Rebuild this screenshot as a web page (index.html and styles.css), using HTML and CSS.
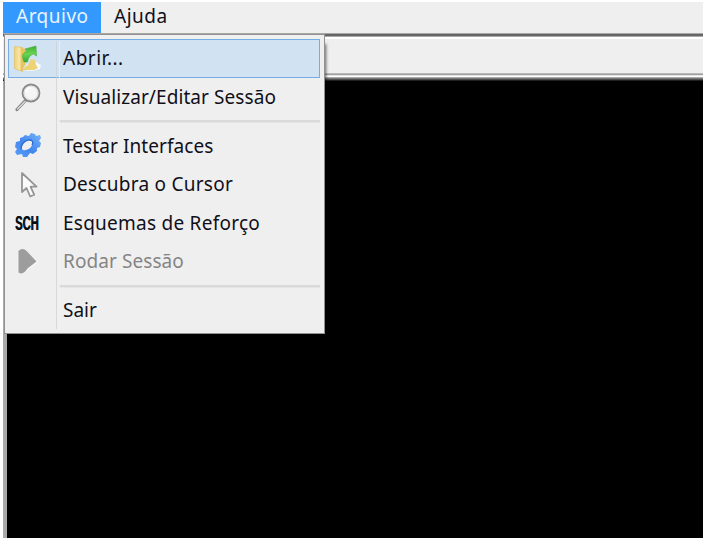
FILE: index.html
```html
<!DOCTYPE html>
<html lang="pt-BR">
<head>
<meta charset="utf-8">
<title>Arquivo</title>
<link rel="stylesheet" href="styles.css">
</head>
<body>
<div class="window">
  <nav class="menubar"><span class="tab active">Arquivo</span><span class="tab">Ajuda</span></nav>
  <div class="toolbar"></div>
  <main class="canvas"></main>
  <div class="menu">
    <div class="item selected">
      <svg class="icon" viewBox="0 0 34 34">
        <defs>
          <linearGradient id="folder"><stop offset="0" stop-color="#efd078"/><stop offset=".6" stop-color="#f9e6a6"/><stop offset="1" stop-color="#dfb950"/></linearGradient>
          <linearGradient id="arrow" x2="0" y2="1"><stop offset="0" stop-color="#3fae38"/><stop offset=".5" stop-color="#69d551"/><stop offset="1" stop-color="#35a832"/></linearGradient>
        </defs>
        <path d="M18 24l6-5 3 2 5 3-1 4-8 2-9-1z" fill="#fff" opacity=".8"/>
        <path d="M12 29l7-5 3-6 4 1 1 5 2 3-4 2z" fill="#eed375"/>
        <path d="M5.500 5.500l8 1v24l-8-3z" fill="url(#folder)" stroke="#e0c06a" stroke-width=".7"/>
        <path d="M12 7l5 1 1 5-2 11-4 6z" fill="#e8c65f"/>
        <path d="M15 21C12 14 14 12 18 10L16 8l11-3 .5 10-3-2c-3 1-5 3-6 8z" fill="url(#arrow)" stroke="#45ad3c" stroke-width=".6"/>
      </svg><span class="label w-open">Abrir...</span>
    </div>
    <div class="item">
      <svg class="icon" viewBox="0 0 34 34">
        <path d="M16.500 20.500L8 29.500" stroke="#858585" stroke-width="3.200" stroke-linecap="round"/>
        <path d="M16 21.500L8.500 29" stroke="#ddd" stroke-width="1.200" stroke-linecap="round"/>
        <circle cx="22" cy="13" r="8.500" fill="#f5f5f5" stroke="#898989" stroke-width="1.800"/>
        <circle cx="22" cy="13" r="6.800" fill="none" stroke="#ddd"/>
        <path d="M17 12q1-4 5-4" fill="none" stroke="#fff" stroke-width="2"/>
      </svg><span class="label w-view">Visualizar/Editar Sessão</span>
    </div>
    <div class="separator"></div>
    <div class="item">
      <svg class="icon" viewBox="0 0 34 34">
        <defs><linearGradient id="gear" x1="1" y1="0" x2="0" y2="1"><stop offset="0" stop-color="#77b4fa"/><stop offset=".55" stop-color="#4387ee"/><stop offset="1" stop-color="#5ba0fb"/></linearGradient></defs>
        <path fill="url(#gear)" fill-rule="evenodd" d="M16 6l4 1 2-3 4 1 1 2 4-1 1 3-2 3 2 2-1 4-3 1 0 3-4 3-3-1-3 4-4 0-1-3-5 1-2-3 2-3-2-2 1-5 4-1 0-3 3-1zM13 20c2 3 9 0 10-4s-1-5-5-4-6 5-5 8z"/>
        <path d="M12 20c0-4 3-8 7-9s6 2 4 5" fill="none" stroke="#2a69cf" stroke-width="1.200"/>
      </svg><span class="label w-test">Testar Interfaces</span>
    </div>
    <div class="item">
      <svg class="icon" viewBox="0 0 34 34">
        <path d="M13 6v19l4.500-4 3.700 8.500 4-1.800-3.700-8h6z" fill="#fafafa" stroke="#959595" stroke-width="1.800" stroke-linejoin="round"/>
      </svg><span class="label w-cursor">Descubra o Cursor</span>
    </div>
    <div class="item">
      <span class="icon sch"><b>SCH</b></span><span class="label w-scheme">Esquemas de Reforço</span>
    </div>
    <div class="item disabled">
      <svg class="icon" viewBox="0 0 34 34">
        <path d="M11 9l6 0 12 9-11 9q-3 3-6 2z" fill="#f8f8f8"/>
        <path d="M9.500 7Q11 5 13.500 5q3 0 5 3l9 9.500-9 7q-3 5-7 5l-2-1z" fill="#9d9d9d"/>
      </svg><span class="label w-run">Rodar Sessão</span>
    </div>
    <div class="separator"></div>
    <div class="item"><span class="icon"></span><span class="label">Sair</span></div>
  </div>
</div>
</body>
</html>
```
FILE: styles.css
```css
* { box-sizing: border-box; }
body { margin: 0; background: #fff; width: 706px; height: 541px; overflow: hidden; padding: 2px 3px 3px; font-family: "Noto Sans", sans-serif; font-size: 19px; color: #101018; }
.window { position: relative; display: flex; flex-direction: column; width: 700px; height: 536px; background: #efefef; }
.menubar { display: flex; height: 31px; }
.tab { padding: 0 13px; line-height: 29px; height: 32px; letter-spacing: .5px; }
.active { width: 98px; background: #3399ff; color: #e8f4ff; }
.toolbar { height: 48px; flex: none; background: linear-gradient(#a7a7a7 0 1px, #666 1px 3px, #aaa 3px 4px, #fff 4px 6px, #efefef 6px 40px, #bbb 40px 41px, #a0a0a0 41px 42px, #e5e5e5 42px 43px, #fff 43px 44px, #aaa 44px 45px, #777 45px 46px, #505050 46px 47px, #202020 47px); }
.canvas { flex: 1; background: #000; border-left: 4px solid; border-image: linear-gradient(90deg, #aaa 0, #858585 35%, #777 60%, #333) 1; }
.menu { position: absolute; left: 1px; top: 32px; width: 321px; height: 300px; padding: 4px 4px 4px 3px; background: #efefef; border: 1px solid #929292; box-shadow: 3px 8px 3px -2px #0009; }
.menu::after { content: ""; position: absolute; left: 51px; top: 6px; bottom: 4px; width: 2px; border-left: 1px solid #d0d0d0; border-right: 1px solid #f2f2f2; opacity: .7; }
.item { display: flex; align-items: center; height: 38.5px; border: 1px solid transparent; }
.selected { background: #d1e2f2; border-color: #75aee5; }
.icon { width: 34px; height: 34px; flex: none; margin-right: 20px; }
.label { line-height: 24px; white-space: nowrap; }
.w-open { letter-spacing: .5px; }
.w-view, .w-test, .w-run { letter-spacing: .08px; }
.w-cursor, .w-scheme { letter-spacing: .25px; }
.separator { height: 10.5px; padding: 4px 0 0 51px; }
.separator::before { content: ""; display: block; height: 2px; background: #dadada; border-bottom: 1px solid #e5e5e5; }
.disabled { color: #858585; }
.sch { display: flex; align-items: center; padding-left: 6px; }
.sch b { font: bold 20px/20px "Liberation Sans", sans-serif; color: #090b0d; transform: scaleX(.56); transform-origin: left; text-shadow: 1px 0 #174d75; }
```
